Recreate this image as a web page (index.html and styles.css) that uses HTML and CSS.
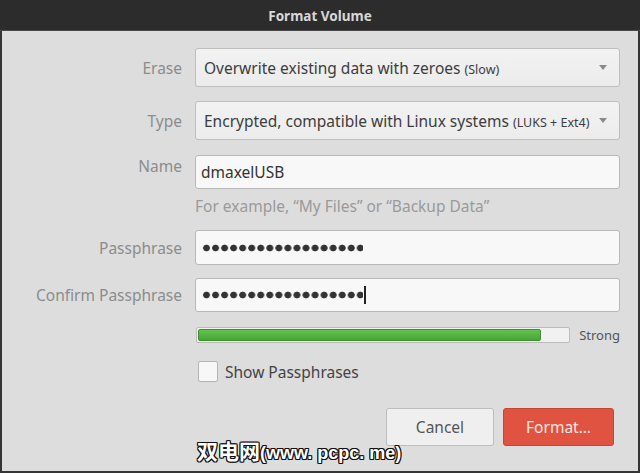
FILE: index.html
```html
<!DOCTYPE html>
<html>
<head>
<meta charset="utf-8">
<link rel="stylesheet" href="styles.css">
</head>
<body>
<div class="window">
  <header class="titlebar">Format Volume</header>
  <main class="content">
    <div class="row row-erase">
      <span class="lbl">Erase</span>
      <div class="combo"><span class="combo-text">Overwrite existing data with zeroes <small>(Slow)</small></span><span class="arrow"></span></div>
    </div>
    <div class="row row-type">
      <span class="lbl">Type</span>
      <div class="combo"><span class="combo-text">Encrypted, compatible with Linux systems <small>(LUKS + Ext4)</small></span><span class="arrow"></span></div>
    </div>
    <div class="row row-name">
      <span class="lbl lbl-top">Name</span>
      <div class="entry">dmaxelUSB</div>
    </div>
    <div class="row row-hint">
      <span></span>
      <div class="hint">For example, “My Files” or “Backup Data”</div>
    </div>
    <div class="row row-pass">
      <span class="lbl">Passphrase</span>
      <div class="entry"><span class="dots"></span></div>
    </div>
    <div class="row row-confirm">
      <span class="lbl">Confirm Passphrase</span>
      <div class="entry"><span class="dots"></span><span class="cursor"></span></div>
    </div>
    <div class="row row-strength">
      <span></span>
      <div class="strength">
        <div class="bar"><div class="fill"></div></div>
        <span class="strong">Strong</span>
      </div>
    </div>
    <div class="row row-check">
      <span></span>
      <label class="check"><span class="box"></span>Show Passphrases</label>
    </div>
    <div class="buttons">
      <button class="btn btn-cancel">Cancel</button>
      <button class="btn btn-format">Format…</button>
    </div>
  </main>
  <div class="watermark">双电网<span class="wm-latin">(www. pcpc. me)</span></div>
</div>
</body>
</html>
```
FILE: styles.css
```css
* { box-sizing: border-box; }
html, body { margin: 0; padding: 0; }
body {
  width: 640px;
  height: 473px;
  overflow: hidden;
  font-family: "Noto Sans", "Open Sans", sans-serif;
  background: #dddddd;
}
.window {
  position: relative;
  width: 640px;
  height: 473px;
  border: 2px solid #353535;
  border-top: 0;
  background: #dddddd;
}
.titlebar {
  height: 31px;
  margin: 0 -2px;
  background: #2c2c2c;
  color: #d8d8d8;
  font-weight: bold;
  font-size: 13.5px;
  display: flex;
  align-items: center;
  justify-content: center;
  padding-top: 1px;
  border-bottom: 1px solid #4a4a4a;
}
.content {
  padding: 0 18px 0 20px;
  display: flex;
  flex-direction: column;
}
.row {
  display: grid;
  grid-template-columns: 160px 1fr;
  column-gap: 13px;
  align-items: center;
}
.lbl {
  text-align: right;
  color: #8c8c8c;
  font-size: 15.5px;
  line-height: 20px;
  white-space: nowrap;
}
.lbl-top { align-self: start; padding-top: 1px; }
.row-erase { margin-top: 17px; }
.row-type { margin-top: 14px; }
.row-name { margin-top: 15px; }
.row-hint { margin-top: 7px; }
.row-pass { margin-top: 14px; }
.row-confirm { margin-top: 13px; }
.row-strength { margin-top: 15px; }
.row-check { margin-top: 18px; }
.combo {
  height: 39px;
  border: 1px solid #bfbfbf;
  border-radius: 3px;
  background: linear-gradient(#f2f2f2, #ececec);
  display: flex;
  align-items: center;
  padding: 0 12px 0 8px;
  color: #3d3d3d;
  font-size: 15.5px;
}
.combo-text { flex: 1; white-space: nowrap; }
.combo small { font-size: 12.5px; }
.arrow {
  width: 0;
  height: 0;
  border-left: 4.5px solid transparent;
  border-right: 4.5px solid transparent;
  border-top: 5px solid #8a8a8a;
}
.entry {
  height: 35px;
  border: 1px solid #b8b8b8;
  border-radius: 3px;
  background: #f8f8f8;
  display: flex;
  align-items: center;
  padding: 0 5px;
  color: #333;
  font-size: 15.5px;
}
.row-confirm .entry { height: 34px; }
.row-name .entry { height: 34px; }
.hint {
  color: #9a9a9a;
  font-size: 15.5px;
  line-height: 20px;
}
.dots {
  display: block;
  width: 161px;
  height: 8px;
  margin-left: 1px;
  background: radial-gradient(circle at 4.5px 4px, #333 3.1px, transparent 3.7px) 0 0 / 9.06px 8px repeat-x;
}
.cursor {
  display: block;
  width: 1.5px;
  height: 18px;
  background: #222;
  margin-left: 1px;
}
.strength {
  display: flex;
  align-items: center;
  gap: 9px;
  padding-left: 1px;
}
.bar {
  flex: 1;
  height: 16px;
  border: 1px solid #bcbcbc;
  border-radius: 2px;
  background: #f1f1f1;
  padding: 1px;
}
.fill {
  height: 100%;
  width: 343px;
  border-radius: 2px;
  background: linear-gradient(#62c24f, #47a635);
  border: 1px solid #3f8f30;
}
.strong {
  color: #555;
  font-size: 13px;
  line-height: 16px;
}
.check {
  display: flex;
  align-items: center;
  gap: 7px;
  color: #444;
  font-size: 15.5px;
  line-height: 20px;
  padding-left: 3px;
}
.box {
  width: 20px;
  height: 21px;
  border: 1px solid #b3b3b3;
  border-radius: 2px;
  background: #f7f7f7;
}
.buttons {
  display: flex;
  justify-content: flex-end;
  gap: 9px;
  margin-top: 26px;
  padding-right: 6px;
}
.btn {
  height: 38px;
  border-radius: 3px;
  font-family: "Noto Sans", sans-serif;
  font-size: 15.5px;
  padding: 0;
}
.btn-cancel {
  width: 108px;
  background: #efefef;
  border: 1px solid #bdbdbd;
  color: #555;
}
.btn-format {
  width: 111px;
  background: #df5340;
  border: 1px solid #c44532;
  color: #fbe8e4;
}
.watermark {
  position: absolute;
  left: 195px;
  top: 437px;
  font-family: "Noto Sans CJK SC", sans-serif;
  font-weight: bold;
  font-size: 21px;
  line-height: 26px;
  color: #ffffff;
  text-shadow: 1px 1px 0 #111, -1px -1px 0 #111, 1px -1px 0 #111, -1px 1px 0 #111, 0 1px 0 #111, 1px 0 0 #111, 0 -1px 0 #111, -1px 0 0 #111;
}
.wm-latin {
  font-family: "Liberation Sans", sans-serif;
  font-size: 18px;
  font-weight: bold;
}
```
